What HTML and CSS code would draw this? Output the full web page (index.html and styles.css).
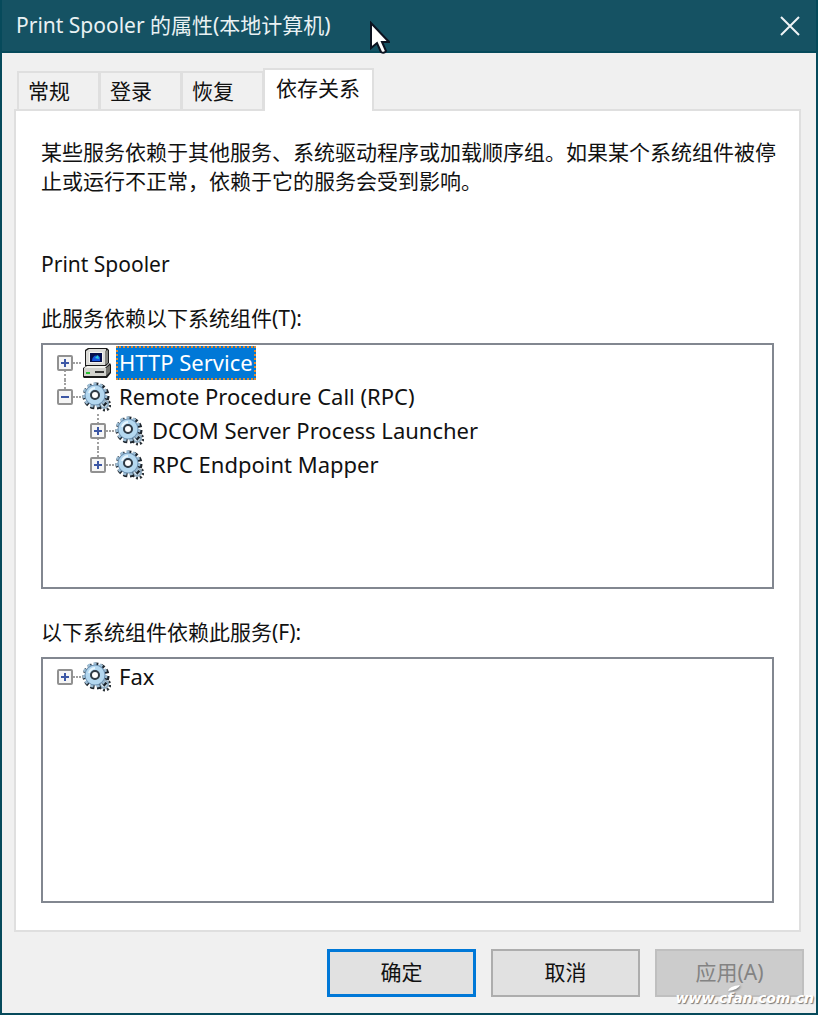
FILE: index.html
```html
<!DOCTYPE html>
<html lang="zh-CN">
<head>
    <meta charset="UTF-8">
    <meta name="viewport" content="width=device-width, initial-scale=1.0">
    <title>Print Spooler 的属性(本地计算机)</title>
    <link rel="stylesheet" href="styles.css">
</head>
<body>
    <!-- shared icons -->
    <svg class="sprite" aria-hidden="true">
        <symbol id="gear" viewBox="0 0 30 30">
            <circle cx="24" cy="23" r="5" fill="none" stroke="#2b3238" stroke-width="3" pathLength="80" stroke-dasharray="5 5"/>
            <circle cx="23" cy="22" r="4" fill="#d6e8f4" stroke="#8fabc0" stroke-width="2"/>
            <circle cx="23" cy="22" r="1" fill="#46525d"/>
            <circle cx="15" cy="14" r="11" fill="none" stroke="#1c242c" stroke-width="5" pathLength="110" stroke-dasharray="6 4"/>
            <circle cx="14" cy="13" r="11" fill="none" stroke="#9dbdd4" stroke-width="3" pathLength="110" stroke-dasharray="5 5"/>
            <circle cx="14" cy="13" r="7" fill="none" stroke="#6f93b3" stroke-width="7"/>
            <circle cx="14" cy="13" r="7" fill="none" stroke="#b4d8f0" stroke-width="5"/>
            <path d="M8 11a7 7 0 0 1 6-5" fill="none" stroke="#e9f6fd" stroke-width="2"/>
            <circle cx="14" cy="13" r="4" fill="#fff" stroke="#2f3a45" stroke-width="2"/>
        </symbol>
        <symbol id="computer" viewBox="0 0 30 30">
            <path d="M4 2 7 0h19l2 2v13l-3 3H4z" fill="#1a1a1a"/>
            <path d="M5 3 8 1h17l-1 16H5z" fill="#dcdcd8"/>
            <path d="m24 3 3-1v13l-3 2z" fill="#85857f"/>
            <path d="M8 4h14v11H8z" fill="#f4f4f0"/>
            <path d="M9 5h12v9H9z" fill="#05104c"/>
            <path d="M11 13c0-5 4-7 8-4v4z" fill="#1557e0"/>
            <path d="m14 10 3-3 1 4z" fill="#2dd0d2"/>
            <path d="m2 20 3-2h21l3-3 1 2v8l-4 5H3l-1-1z" fill="#1a1a1a"/>
            <path d="m3 20 3-2h20l-2 2z" fill="#f2f2ed"/>
            <path d="M3 20h22v8H3z" fill="#d2d2cd"/>
            <path d="m25 20 4-3v7l-4 4z" fill="#73736e"/>
            <path d="M5 24h4v2H5z" fill="#28bf31"/>
            <path d="M14 23h9v2h-9z" fill="#333"/>
        </symbol>
    </svg>

    <div class="window">
        <header class="titlebar">
            <h1>Print Spooler 的属性(本地计算机)</h1>
            <button class="close" aria-label="关闭">
                <svg width="20" height="20" viewBox="0 0 20 20"><path d="M1 1l18 18M19 1 1 19" stroke="#eef4f6" stroke-width="2"/></svg>
            </button>
        </header>

        <main class="content">
            <div class="tabs" role="tablist">
                <button class="tab" role="tab">常规</button>
                <button class="tab" role="tab">登录</button>
                <button class="tab" role="tab">恢复</button>
                <button class="tab active" role="tab" aria-selected="true">依存关系</button>
            </div>

            <section class="panel" role="tabpanel">
                <p class="intro">某些服务依赖于其他服务、系统驱动程序或加载顺序组。如果某个系统组件被停止或运行不正常，依赖于它的服务会受到影响。</p>
                <p class="service">Print Spooler</p>

                <h2 id="depends-on">此服务依赖以下系统组件(T):</h2>
                <div class="tree-box">
                    <ul class="tree" role="tree" aria-labelledby="depends-on">
                        <li role="treeitem" aria-selected="true">
                            <div class="row">
                                <button class="toggle" aria-label="展开"></button>
                                <svg class="icon"><use href="#computer"/></svg>
                                <span class="label selected">HTTP Service</span>
                            </div>
                        </li>
                        <li role="treeitem" aria-expanded="true">
                            <div class="row">
                                <button class="toggle open" aria-label="折叠"></button>
                                <svg class="icon"><use href="#gear"/></svg>
                                <span class="label">Remote Procedure Call (RPC)</span>
                            </div>
                            <ul role="group">
                                <li role="treeitem">
                                    <div class="row">
                                        <button class="toggle" aria-label="展开"></button>
                                        <svg class="icon"><use href="#gear"/></svg>
                                        <span class="label">DCOM Server Process Launcher</span>
                                    </div>
                                </li>
                                <li role="treeitem">
                                    <div class="row">
                                        <button class="toggle" aria-label="展开"></button>
                                        <svg class="icon"><use href="#gear"/></svg>
                                        <span class="label">RPC Endpoint Mapper</span>
                                    </div>
                                </li>
                            </ul>
                        </li>
                    </ul>
                </div>

                <h2 id="dependents">以下系统组件依赖此服务(F):</h2>
                <div class="tree-box">
                    <ul class="tree" role="tree" aria-labelledby="dependents">
                        <li role="treeitem">
                            <div class="row">
                                <button class="toggle" aria-label="展开"></button>
                                <svg class="icon"><use href="#gear"/></svg>
                                <span class="label">Fax</span>
                            </div>
                        </li>
                    </ul>
                </div>
            </section>

            <footer class="actions">
                <button class="btn default">确定</button>
                <button class="btn">取消</button>
                <button class="btn" disabled>应用(A)</button>
            </footer>
        </main>

        <svg class="cursor" width="22" height="36" viewBox="0 0 22 36" aria-hidden="true">
            <path d="M3 2v25l6-5 4 9q3 2 5-1l-4-9h7z" fill="#fff" stroke="#0b1220" stroke-width="2"/>
        </svg>
        <div class="watermark">
            <svg class="leaf" width="12" height="8" viewBox="0 0 12 8" aria-hidden="true"><path d="M0 7q1-5 12-6-2 5-12 6z" fill="#fff"/></svg>
            www.cfan.com.cn
        </div>
    </div>
</body>
</html>
```
FILE: styles.css
```css
* {
    box-sizing: border-box;
}

body {
    margin: 0;
    font-family: "Noto Sans", "Noto Sans CJK SC", sans-serif;
    font-size: 21px;
    line-height: 29px;
    color: #111;
}

h1, h2, p, ul {
    margin: 0;
    padding: 0;
    font-size: 21px;
    font-weight: normal;
}

button {
    font: inherit;
    color: inherit;
    padding: 0;
}

.sprite {
    position: absolute;
    width: 0;
    height: 0;
}

.window {
    position: relative;
    display: flex;
    flex-direction: column;
    min-height: 100vh;
    border: 2px solid #064a5b;
    border-top: none;
    background: #f0f0f0;
}

/* title bar */
.titlebar {
    display: flex;
    justify-content: space-between;
    align-items: center;
    height: 53px;
    padding: 0 14px;
    background: #155263;
    border-bottom: 2px solid #064a5b;
    color: #e9f1f3;
}

.close {
    display: flex;
    padding: 2px;
    border: none;
    background: none;
}

.content {
    flex: 1;
    display: flex;
    flex-direction: column;
    padding: 15px 12px 16px;
}

/* tabs */
.tabs {
    display: flex;
    align-items: flex-end;
    padding-left: 3px;
}

.tab {
    width: 83px;
    height: 38px;
    padding-left: 9px;
    border: 2px solid #dfdfdf;
    border-bottom: none;
    margin-right: -1px;
    background: #f0f0f0;
    text-align: left;
}

.tab.active {
    width: 111px;
    height: 43px;
    padding: 0 0 4px 11px;
    margin-bottom: -2px;
    background: #fff;
    z-index: 1;
}

.panel {
    flex: 1;
    display: flex;
    flex-direction: column;
    margin-right: 3px;
    padding: 27px 22px 27px 25px;
    border: 2px solid #dfdfdf;
    background: #fff;
}

.intro {
    margin-bottom: 54px;
}

.service {
    margin-bottom: 25px;
}

.panel h2 {
    margin-bottom: 10px;
}

/* trees */
.tree-box {
    flex: 1 0 0px;
    min-height: 160px;
    margin-right: 3px;
    padding: 1px 14px;
    border: 2px solid #828790;
}

.tree-box + h2 {
    margin-top: 29px;
}

.tree, .tree ul {
    list-style: none;
}

.tree ul {
    padding-left: 33px;
}

.tree li {
    position: relative;
}

/* dotted line down the left of the toggles */
.tree li::before {
    content: "";
    position: absolute;
    top: 0;
    left: 7px;
    height: 17px;
    border-left: 2px dotted #a0a0a0;
}

.tree li:not(:last-child)::before {
    height: 100%;
}

.tree > li:first-child::before {
    top: 17px;
    height: 17px;
}

.tree > li:only-child::before {
    display: none;
}

.row {
    display: flex;
    align-items: center;
    height: 34px;
}

.row::before {
    content: "";
    order: 1;
    width: 8px;
    border-top: 2px dotted #a0a0a0;
}

.toggle {
    position: relative;
    width: 16px;
    height: 16px;
    border: 2px solid #919191;
    border-radius: 2px;
    background:
        linear-gradient(#3c57a5, #3c57a5) center / 8px 2px no-repeat,
        linear-gradient(#3c57a5, #3c57a5) center / 2px 8px no-repeat,
        #f5f5f5;
}

.toggle.open {
    background:
        linear-gradient(#3c57a5, #3c57a5) center / 8px 2px no-repeat,
        #f5f5f5;
}

.icon {
    order: 2;
    width: 30px;
    height: 30px;
}

.label {
    order: 3;
    margin-left: 5px;
    padding: 0 1px 1px;
    border: 2px solid transparent;
    font-size: 22px;
    white-space: nowrap;
}

.label.selected {
    border: 2px dotted #e08a30;
    background: #0078d7;
    color: #fff;
}

/* bottom buttons */
.actions {
    display: flex;
    justify-content: flex-end;
    gap: 15px;
    margin-top: 17px;
}

.btn {
    width: 149px;
    height: 48px;
    padding-bottom: 2px;
    border: 2px solid #adadad;
    background: #e1e1e1;
}

.btn.default {
    border: 3px solid #0078d7;
}

.btn:disabled {
    border-color: #bfbfbf;
    background: #ccc;
    color: #838383;
}

.cursor {
    position: absolute;
    top: 21px;
    left: 366px;
}

.watermark {
    position: absolute;
    right: 2px;
    bottom: 0;
    font-family: "DejaVu Sans", sans-serif;
    font-size: 14px;
    font-weight: bold;
    font-style: italic;
    color: #fff;
    text-shadow: 1px 1px 1px #777;
}

.leaf {
    position: absolute;
    top: 0;
    left: 52px;
    filter: drop-shadow(1px 1px 1px #777);
}
```
